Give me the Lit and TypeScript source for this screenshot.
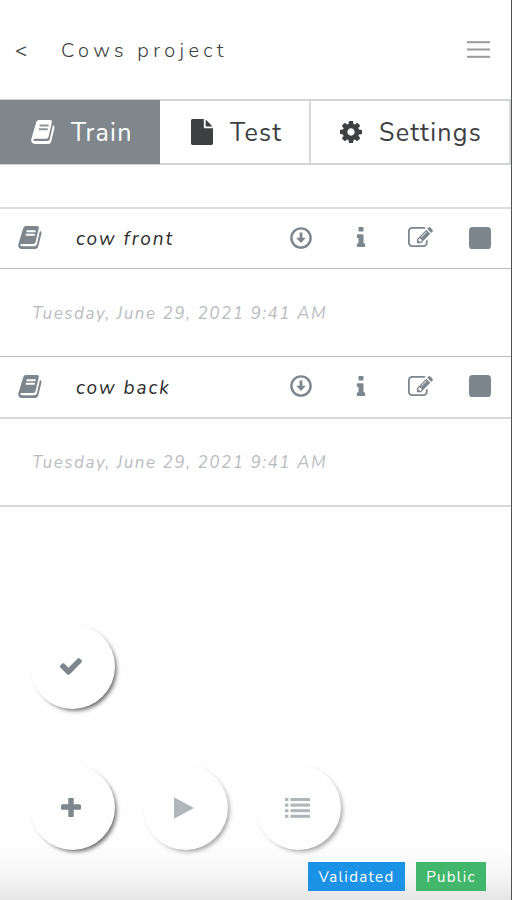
import { LitElement, html, css, svg } from "lit";
import { customElement, property } from "lit/decorators.js";

const COG = "M1152 896q0-106-75-181t-181-75-181 75-75 181 75 181 181 75 181-75 75-181zm512-109v222q0 12-8 23t-20 13l-185 28q-19 54-39 91 35 50 107 138 10 12 10 25t-9 23q-27 37-99 108t-94 71q-12 0-26-9l-138-108q-44 23-91 38-16 136-29 186-7 28-36 28h-222q-14 0-24.5-8.5t-11.5-21.5l-28-184q-49-16-90-37l-141 107q-10 9-25 9-14 0-25-11-126-114-165-168-7-10-7-23 0-12 8-23 15-21 51-66.5t54-70.5q-27-50-41-99l-183-27q-13-2-21-12.5t-8-23.5v-222q0-12 8-23t19-13l186-28q14-46 39-92-40-57-107-138-10-12-10-24 0-10 9-23 26-36 98.5-107.5t94.5-71.5q13 0 26 10l138 107q44-23 91-38 16-136 29-186 7-28 36-28h222q14 0 24.5 8.5t11.5 21.5l28 184q49 16 90 37l142-107q9-9 24-9 13 0 25 10 129 119 165 170 7 8 7 22 0 12-8 23-15 21-51 66.5t-54 70.5q26 50 41 98l183 28q13 2 21 12.5t8 23.5z";
const FILE = "M1152 512v-472q22 14 36 28l408 408q14 14 28 36h-472zm-128 32q0 40 28 68t68 28h544v1056q0 40-28 68t-68 28h-1344q-40 0-68-28t-28-68v-1600q0-40 28-68t68-28h800v544z";
const INFO = "M1216 1344v128q0 26-19 45t-45 19h-512q-26 0-45-19t-19-45v-128q0-26 19-45t45-19h64v-384h-64q-26 0-45-19t-19-45v-128q0-26 19-45t45-19h384q26 0 45 19t19 45v576h64q26 0 45 19t19 45zm-128-1152v192q0 26-19 45t-45 19h-256q-26 0-45-19t-19-45v-192q0-26 19-45t45-19h256q26 0 45 19t19 45z";
const EDIT = "M888 1184l116-116-152-152-116 116v56h96v96h56zm440-720q-16-16-33 1l-350 350q-17 17-1 33t33-1l350-350q17-17 1-33zm80 594v190q0 119-84.5 203.5t-203.5 84.5h-832q-119 0-203.5-84.5t-84.5-203.5v-832q0-119 84.5-203.5t203.5-84.5h832q63 0 117 25 15 7 18 23 3 17-9 29l-49 49q-14 14-32 8-23-6-45-6h-832q-66 0-113 47t-47 113v832q0 66 47 113t113 47h832q66 0 113-47t47-113v-126q0-13 9-22l64-64q15-15 35-7t20 29zm-96-738l288 288-672 672h-288v-288zm444 132l-92 92-288-288 92-92q28-28 68-28t68 28l152 152q28 28 28 68t-28 68z";
const CHECK = "M1671 566q0 40-28 68l-724 724-136 136q-28 28-68 28t-68-28l-136-136-362-362q-28-28-28-68t28-68l136-136q28-28 68-28t68 28l294 295 656-657q28-28 68-28t68 28l136 136q28 28 28 68z";
const PLUS = "M1600 736v192q0 40-28 68t-68 28h-416v416q0 40-28 68t-68 28h-192q-40 0-68-28t-28-68v-416h-416q-40 0-68-28t-28-68v-192q0-40 28-68t68-28h416v-416q0-40 28-68t68-28h192q40 0 68 28t28 68v416h416q40 0 68 28t28 68z";

const shapes: Record<string, { box: string; body: unknown }> = {
  book: {
    box: "0 0 24 23",
    body: svg`<path d="M8 0H19q2.300 0 1.800 2.300L17.600 16q-.5 1.900-2.500 1.900H4.500q-2.400 0-2.300 1.100 .2 1.200 2 1.200H16.500q1.800 0 2.300-1.700L22 4.800q1.900 .9 1.400 3L20.300 20.300q-.7 2.700-3.500 2.700H4Q0 23 .2 18.800L5.200 2.200Q5.900 0 8 0z" />
      <path d="M8.600 5.200h9M7.800 8.800h9" fill="none" stroke="var(--label, #fff)" stroke-width="1.9" />`,
  },
  cog: { box: "128 128 1536 1536", body: svg`<path d=${COG} />` },
  file: { box: "128 0 1536 1792", body: svg`<path d=${FILE} />` },
  info: { box: "512 128 768 1408", body: svg`<path d=${INFO} />` },
  edit: { box: "0 128 1792 1408", body: svg`<path d=${EDIT} />` },
  check: { box: "121 334 1550 1188", body: svg`<path d=${CHECK} />` },
  plus: { box: "192 192 1408 1408", body: svg`<path d=${PLUS} />` },
  down: {
    box: "0 0 22 22",
    body: svg`<circle cx="11" cy="11" r="9.600" fill="none" stroke="currentColor" stroke-width="2.400" />
      <path d="M9.600 5.500h2.800v5.200h3.400L11 16 6.200 10.700h3.400z" />`,
  },
  stop: { box: "0 0 22 22", body: svg`<rect width="22" height="22" rx="3.600" />` },
  play: { box: "0 0 20 22", body: svg`<path d="M0 0.300 20 11 0 21.700z" />` },
  list: {
    box: "0 0 25 20",
    body: [0, 5.6, 11.200, 16.800].map(
      (y) => svg`<rect x="0" y=${y} width="3.4" height="3" /><rect x="5.500" y=${y} width="19.500" height="3" />`
    ),
  },
  menu: {
    box: "0 0 23 17",
    body: [0.2, 7.5, 14.800].map((y) => svg`<rect x="0" y=${y} width="23" height="2" />`),
  },
};

@customElement("ui-icon")
class UiIcon extends LitElement {
  @property() name = "";
  static styles = css`
    :host { display: block; flex: none; }
    svg { display: block; width: 100%; height: 100%; fill: currentColor; }
  `;
  render() {
    const s = shapes[this.name];
    return html`<svg viewBox=${s.box} preserveAspectRatio="none">${s.body}</svg>`;
  }
}

@customElement("data-item")
class DataItem extends LitElement {
  @property() name = "";
  @property() date = "";
  static styles = css`
    :host { display: block; --line: 1px solid #b9bdbe; --row: 60px; --lift: 2px; }
    :host(.soft) { --line: 2px solid #d6d8d8; --row: 62px; }
    .row {
      display: flex; align-items: center; box-sizing: border-box; height: var(--row);
      padding: 0 20px var(--lift) 18px; border-bottom: var(--line); color: #7d868d;
    }
    .name { flex: 1; margin-left: 34px; padding-top: 3px; color: #2c2c2c; font-size: 19px; font-style: italic; letter-spacing: 1.900px; white-space: nowrap; }
    .book { width: 24px; height: 23px; }
    .down { width: 22px; height: 22px; margin-right: 44px; }
    .info { width: 10px; height: 20px; margin: 0 42px 1px 0; }
    .edit { width: 25px; height: 20px; margin: 0 36px 1px 0; }
    .stop { width: 22px; height: 22px; }
    .date {
      display: flex; align-items: center; box-sizing: border-box; height: 88px; padding: 1px 0 0 32px;
      border-bottom: var(--line); color: #b9bcbe; font-size: 17px; font-style: italic; letter-spacing: 1.55px; white-space: nowrap;
    }
  `;
  render() {
    return html`
      <div class="row">
        <ui-icon class="book" name="book"></ui-icon>
        <span class="name">${this.name}</span>
        <ui-icon class="down" name="down"></ui-icon>
        <ui-icon class="info" name="info"></ui-icon>
        <ui-icon class="edit" name="edit"></ui-icon>
        <ui-icon class="stop" name="stop"></ui-icon>
      </div>
      <div class="date"><span>${this.date}</span></div>
    `;
  }
}

@customElement("app-root")
class AppRoot extends LitElement {
  static styles = css`
    :host {
      display: block; box-sizing: border-box; width: 512px; height: 900px; overflow: hidden;
      border-right: 1px solid #505254;
      background: linear-gradient(#fefefe 0, #fefefe 845px, #f6f6f6 875px, #e5e5e5 900px);
      font-family: Nunito, Lato, sans-serif; font-weight: 400; color: #3c3e40;
    }
    .page { display: flex; flex-direction: column; height: 900px; }
    header { display: flex; align-items: center; box-sizing: border-box; height: 99px; padding: 0 21px 0 15px; }
    .back { width: 46px; padding-top: 2px; font-size: 20px; }
    .title { flex: 1; padding-top: 2px; font-size: 20px; font-weight: 300; letter-spacing: 4.350px; }
    .menu { width: 23px; height: 17px; color: #9a9a9a; }
    nav { display: flex; box-sizing: border-box; height: 66px; border: 2px solid #d2d3d3; border-width: 2px 0; }
    .tab { display: flex; align-items: center; box-sizing: border-box; padding-top: 1px; font-size: 25px; letter-spacing: 1.3px; white-space: nowrap; border-right: 2px solid #d6d7d7; }
    .train { width: 160px; margin: -1px 0; padding-left: 31px; background: #7f878d; color: #fff; border: 0; --label: #8f969b; }
    .test { width: 151px; padding-left: 31px; }
    .settings { width: 200px; padding-left: 29px; }
    .train ui-icon { width: 24px; height: 24px; margin: 0 16px 1px 0; }
    .test ui-icon { width: 22px; height: 26px; margin: 0 17px 2px 0; color: #3d3f41; }
    .settings ui-icon { width: 22px; height: 22px; margin: 0 17px 2px 0; color: #3d3f41; }
    .list { margin-top: 42px; border-top: 2px solid #dcdcdc; }
    .actions { display: grid; grid-template-columns: repeat(3, 85px); gap: 56px 28px; margin: 117px 0 0 30px; }
    .fab {
      display: flex; align-items: center; justify-content: center; box-sizing: border-box; width: 85px; height: 85px; padding: 0 4px 0 0;
      border-radius: 50%; border: 0; background: #fefefe; color: #7d868d; box-shadow: 3px 3px 4px -1.500px rgba(0, 0, 0, .6);
    }
    .first { grid-column: 1 / -1; }
    .dim { opacity: .6; }
    .check { width: 22px; height: 17px; }
    .plus { width: 20px; height: 20px; }
    .play { width: 20px; height: 22px; }
    .lines { width: 25px; height: 20px; margin-left: 2px; }
    footer { display: flex; justify-content: flex-end; gap: 11px; margin: 12px 25px 0 0; }
    .badge {
      display: flex; align-items: center; justify-content: center; box-sizing: border-box; height: 29px; padding-top: 1px; color: #fff;
      font-size: 15px; letter-spacing: 1.350px;
    }
    .blue { width: 97px; background: #1c92e6; }
    .green { width: 70px; background: #42b76b; }
  `;
  render() {
    return html`
      <div class="page">
        <header>
          <span class="back">&lt;</span>
          <span class="title">Cows project</span>
          <ui-icon class="menu" name="menu"></ui-icon>
        </header>
        <nav>
          <div class="tab train"><ui-icon name="book"></ui-icon><span>Train</span></div>
          <div class="tab test"><ui-icon name="file"></ui-icon><span>Test</span></div>
          <div class="tab settings"><ui-icon name="cog"></ui-icon><span>Settings</span></div>
        </nav>
        <div class="list">
          <data-item name="cow front" date="Tuesday, June 29, 2021 9:41 AM"></data-item>
          <data-item class="soft" name="cow back" date="Tuesday, June 29, 2021 9:41 AM"></data-item>
        </div>
        <div class="actions">
          <button class="fab first"><ui-icon class="check" name="check"></ui-icon></button>
          <button class="fab"><ui-icon class="plus" name="plus"></ui-icon></button>
          <button class="fab dim"><ui-icon class="play" name="play"></ui-icon></button>
          <button class="fab dim"><ui-icon class="lines" name="list"></ui-icon></button>
        </div>
        <footer>
          <span class="badge blue">Validated</span>
          <span class="badge green">Public</span>
        </footer>
      </div>
    `;
  }
}
